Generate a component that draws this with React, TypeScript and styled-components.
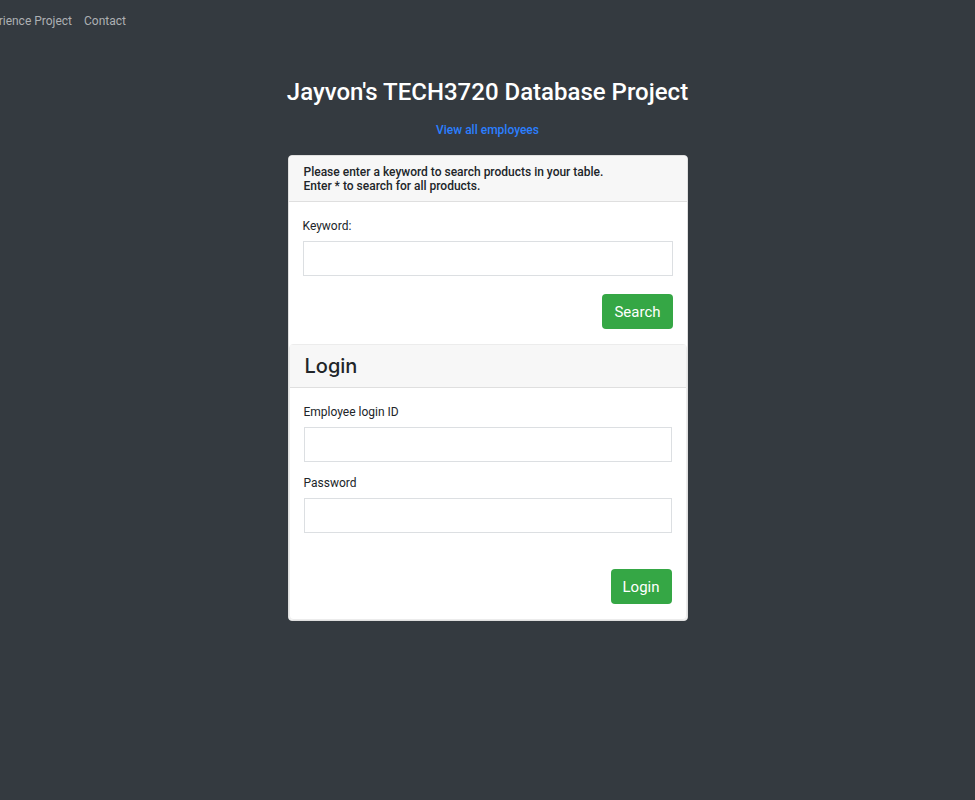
import React from 'react';
import styled, { createGlobalStyle } from 'styled-components';

const GlobalStyle = createGlobalStyle`
  *, *::before, *::after { box-sizing: border-box; }
  body {
    margin: 0;
    background: #343a40;
    color: #212529;
    font-family: Roboto, "Liberation Sans", sans-serif;
    font-size: 12px;
    line-height: 18px;
    overflow-x: hidden;
  }
`;

const Nav = styled.nav`
  display: flex;
  width: 138px;
  height: 42px;
  align-items: center;
  justify-content: flex-end;
  gap: 12px;
  padding-right: 12px;
  overflow: hidden;
`;

const NavLink = styled.a`
  flex: none;
  color: #adb0b3;
  text-decoration: none;
  white-space: nowrap;
`;

const Main = styled.main`
  display: flex;
  flex-direction: column;
  align-items: center;
  padding-top: 35px;
`;

const Title = styled.h1`
  margin: 0 0 14px;
  color: #fff;
  font-size: 24px;
  font-weight: 500;
  line-height: 30px;
  text-align: center;
`;

const EmployeesLink = styled.a`
  margin-bottom: 16px;
  color: #2b7fff;
  font-weight: 500;
  text-decoration: none;
`;

const Card = styled.div`
  width: 100%;
  max-width: 400px;
  overflow: hidden;
  background: #fff;
  border: 1px solid #dfdfdf;
  border-radius: 4px;
`;

const CardHeader = styled.header`
  padding: 9px 15px 8px;
  background: #f7f7f7;
  border-bottom: 1px solid #dfdfdf;
`;

const Prompt = styled.h2`
  margin: 0;
  font-size: 12px;
  font-weight: 500;
  line-height: 14px;
`;

const InnerCard = styled.section`
  border: 1px solid #ececec;
  border-radius: 4px;
`;

const LoginTitle = styled.h2`
  margin: 0;
  font-family: Inter, "Liberation Sans", sans-serif;
  font-size: 20px;
  font-weight: 500;
  line-height: 25px;
`;

const Form = styled.form`
  display: flex;
  flex-direction: column;
  padding: 15px 14px;
`;

const Field = styled.div<{ $gap: number }>`
  display: flex;
  flex-direction: column;
  gap: 6px;
  margin-bottom: ${({ $gap }) => $gap}px;
`;

const Input = styled.input`
  width: 100%;
  height: 35px;
  padding: 6px 12px;
  border: 1px solid #dcdfe2;
  border-radius: 0;
  background: #fff;
  font: inherit;
`;

const Button = styled.button`
  align-self: flex-end;
  height: 35px;
  padding: 0 12px;
  border: 0;
  border-radius: 4px;
  background: #35a745;
  color: #fff;
  font-family: inherit;
  font-size: 15px;
  cursor: pointer;
`;

export default function App() {
  return (
    <>
      <GlobalStyle />
      <Nav aria-label="Main">
        <NavLink href="#experience">Experience Project</NavLink>
        <NavLink href="#contact">Contact</NavLink>
      </Nav>
      <Main>
        <Title>Jayvon's TECH3720 Database Project</Title>
        <EmployeesLink href="#employees">View all employees</EmployeesLink>
        <Card>
          <CardHeader>
            <Prompt>
              Please enter a keyword to search products in your table.
              <br />
              Enter * to search for all products.
            </Prompt>
          </CardHeader>
          <Form onSubmit={(e) => e.preventDefault()}>
            <Field $gap={18}>
              <label htmlFor="keyword">Keyword:</label>
              <Input id="keyword" type="text" />
            </Field>
            <Button type="submit">Search</Button>
          </Form>
          <InnerCard>
            <CardHeader>
              <LoginTitle>Login</LoginTitle>
            </CardHeader>
            <Form onSubmit={(e) => e.preventDefault()}>
              <Field $gap={12}>
                <label htmlFor="login-id">Employee login ID</label>
                <Input id="login-id" type="text" />
              </Field>
              <Field $gap={36}>
                <label htmlFor="password">Password</label>
                <Input id="password" type="password" />
              </Field>
              <Button type="submit">Login</Button>
            </Form>
          </InnerCard>
        </Card>
      </Main>
    </>
  );
}
